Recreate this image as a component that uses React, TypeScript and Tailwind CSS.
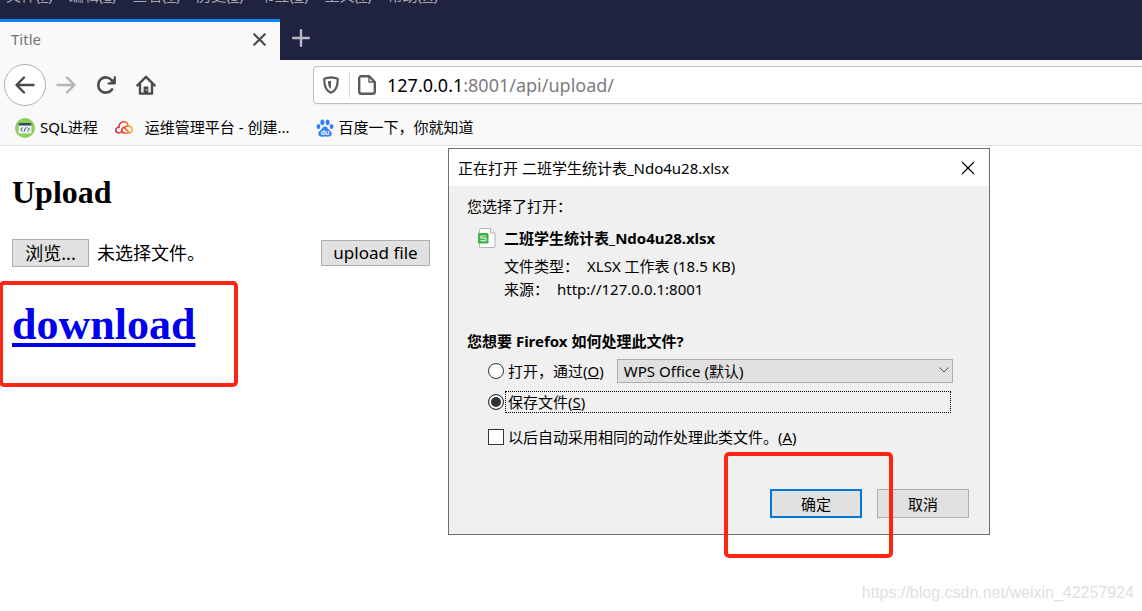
import { useRef, useState } from "react";

const menus = [
  { label: "文件", key: "F" },
  { label: "编辑", key: "E" },
  { label: "查看", key: "V" },
  { label: "历史", key: "S" },
  { label: "书签", key: "B" },
  { label: "工具", key: "T" },
  { label: "帮助", key: "H" },
];

const BackIcon = () => (
  <svg width="20" height="18" viewBox="0 0 20 18" fill="none" stroke="currentColor" strokeWidth="2.4" strokeLinecap="round" strokeLinejoin="round">
    <path d="M18.5 9H2M9 1.5L1.5 9L9 16.5" />
  </svg>
);

const ForwardIcon = () => (
  <svg width="20" height="18" viewBox="0 0 20 18" fill="none" stroke="currentColor" strokeWidth="2.4" strokeLinecap="round" strokeLinejoin="round">
    <path d="M1.5 9H18M11 1.5L18.5 9L11 16.5" />
  </svg>
);

const ReloadIcon = () => (
  <svg width="20" height="18" viewBox="0 0 20 18" fill="none" stroke="currentColor" strokeWidth="2.6" strokeLinecap="round" strokeLinejoin="round">
    <path d="M16 13.4A7.6 7.6 0 1 1 16 4.6" />
    <path d="M18.8 1V7.4H12.4" strokeWidth="2" />
    <path d="M18.8 2.4V7.4H13.8z" fill="currentColor" strokeWidth="1" />
  </svg>
);

const HomeIcon = () => (
  <svg width="20" height="20" viewBox="0 0 20 20" fill="none" stroke="currentColor" strokeWidth="2.4" strokeLinecap="round" strokeLinejoin="round">
    <path d="M1.4 10.4L10 1.8L18.6 10.4" />
    <path d="M4 9.5V18.6H16V9.5" />
    <path d="M8.2 18V12H11.8V18z" fill="currentColor" strokeWidth="1.2" />
    <path d="M10.8 14.6v.8" stroke="#f9f9fa" strokeWidth="1" />
  </svg>
);

const ShieldIcon = () => (
  <svg width="16" height="18" viewBox="0 0 16 18" fill="none" stroke="currentColor" strokeWidth="2.2" strokeLinejoin="round">
    <path d="M8 1.3C5.8 1.5 3.5 2 1.3 2.8C1.1 9.5 2.5 14.6 8 16.7C13.5 14.6 14.9 9.5 14.7 2.8C12.5 2 10.2 1.5 8 1.3z" />
    <path d="M8 4.8V13C5.8 11.5 4.9 9 4.9 5.3z" fill="currentColor" stroke="none" />
  </svg>
);

const PageIcon = () => (
  <svg width="18" height="20" viewBox="0 0 18 20" fill="none" stroke="currentColor" strokeWidth="2.4" strokeLinejoin="round">
    <path d="M4 1.2H11L16.8 7V16.5A2.3 2.3 0 0 1 14.5 18.8H3.5A2.3 2.3 0 0 1 1.2 16.5V3.5A2.3 2.3 0 0 1 4 1.2z" />
    <path d="M11 1.5V7H16.5" strokeWidth="1.4" />
  </svg>
);

const CodeIcon = () => (
  <svg width="20" height="20" viewBox="0 0 20 20">
    <circle cx="10" cy="10" r="10" fill="#8fcf55" />
    <rect x="3.5" y="5" width="13" height="10.5" rx="1" fill="#e9f0f2" />
    <path d="M3.5 7.6V6a1 1 0 0 1 1-1h11a1 1 0 0 1 1 1v1.6z" fill="#324a5e" />
    <path d="M7.6 9.6L5.6 11.4L7.6 13.2M12.4 9.6L14.4 11.4L12.4 13.2M10.7 9.4L9.3 13.4" stroke="#324a5e" strokeWidth="1" fill="none" />
  </svg>
);

const CloudIcon = () => (
  <svg width="18" height="13" viewBox="0 0 18 13" fill="none" strokeWidth="1.6" strokeLinecap="round" strokeLinejoin="round">
    <defs>
      <linearGradient id="cloud" gradientUnits="userSpaceOnUse" x1="0" y1="0" x2="18" y2="0">
        <stop offset="0" stopColor="#cf1f55" />
        <stop offset=".5" stopColor="#f3512c" />
        <stop offset="1" stopColor="#fbb52c" />
      </linearGradient>
    </defs>
    <g stroke="url(#cloud)">
      <path d="M7.4 9.6C6.4 11.2 5.2 12 3.8 12C2 12 .8 10.7 .8 9.1C.8 7.4 2.2 6.2 4 6.2" />
      <path d="M4 6.2C3.8 3 5.8 .8 8.6 .8C11.2 .8 13 2.6 13 5C15.4 4.8 17.2 6.4 17.2 8.5C17.2 10.6 15.6 12 13.4 12H9.6C8 12 6.8 11 6.8 9.4C6.8 7.2 9.4 5.6 13 5" />
      <path d="M9 6.4L13.4 10.6" />
    </g>
  </svg>
);

const PawIcon = () => (
  <svg width="18" height="18" viewBox="0 0 18 18" fill="#2f80f5">
    <ellipse cx="6.4" cy="3.3" rx="2" ry="2.9" />
    <ellipse cx="11.6" cy="3.3" rx="2" ry="2.9" />
    <ellipse cx="2.5" cy="7.4" rx="1.9" ry="2.5" />
    <ellipse cx="15.6" cy="7.4" rx="1.9" ry="2.5" />
    <path d="M9 7.6C11 7.6 11.6 9.5 13 10.8C14.6 12.2 16 13.2 15.6 15.3C15.2 17.6 12.8 17.9 9 17.6C5.2 17.9 2.8 17.6 2.4 15.3C2 13.2 3.4 12.2 5 10.8C6.4 9.5 7 7.6 9 7.6z" />
    <text x="9" y="16" textAnchor="middle" fill="#fff" fontSize="7" fontWeight="700" fontFamily="Liberation Sans, sans-serif">
      du
    </text>
  </svg>
);

const SheetIcon = () => (
  <svg width="18" height="20" viewBox="0 0 18 20">
    <path d="M1.5 1.5A1 1 0 0 1 2.5.5H12.5L17 5V18.5A1 1 0 0 1 16 19.5H2.5A1 1 0 0 1 1.5 18.5z" fill="#fff" stroke="#b5b5b5" />
    <path d="M12.5.5V5H17" fill="#eee" stroke="#b5b5b5" />
    <rect x="0" y="5" width="10.5" height="10.5" rx="1" fill="#3fb24c" />
    <path d="M8 8H3V10.2H7.8V12.6H2.6" fill="none" stroke="#d6f2d9" strokeWidth="1.2" />
  </svg>
);

const DownloadDialog = () => {
  const [action, setAction] = useState<string>("save");
  const [remember, setRemember] = useState<boolean>(false);

  const radioClass =
    "appearance-none w-4 h-4 shrink-0 rounded-full border border-[#333] bg-white checked:bg-[#333] checked:shadow-[inset_0_0_0_2px_white]";

  return (
    <div
      role="dialog"
      aria-labelledby="dialog-title"
      className="absolute left-[448px] top-0.5 w-[542px] border border-[#6e6e6e] bg-[#f0f0f0] text-[15px] leading-5"
    >
      <div className="h-[37px] flex items-center justify-between bg-white pl-[9px] pr-3.5">
        <h2 id="dialog-title">正在打开 二班学生统计表_Ndo4u28.xlsx</h2>
        <button type="button" aria-label="关闭">
          <svg width="14" height="14" viewBox="0 0 14 14" stroke="#000" strokeWidth="1.2">
            <path d="M1 1L13 13M13 1L1 13" />
          </svg>
        </button>
      </div>

      <div className="pl-[18px] pr-5 pt-2.5 pb-4">
        <p>您选择了打开：</p>

        <div className="flex gap-2 pl-[11px] mt-3">
          <SheetIcon />
          <div>
            <p className="font-bold">二班学生统计表_Ndo4u28.xlsx</p>
            <p className="mt-2">
              文件类型：<span className="ml-2">XLSX 工作表 (18.5 KB)</span>
            </p>
            <p className="mt-[3px]">
              来源：<span className="ml-2">http://127.0.0.1:8001</span>
            </p>
          </div>
        </div>

        <p className="font-bold mt-8">您想要 Firefox 如何处理此文件?</p>

        <div className="flex items-center pl-[21px] pr-4 mt-2">
          <label className="flex items-center gap-1">
            <input
              type="radio"
              name="action"
              checked={action === "open"}
              onChange={() => setAction("open")}
              className={radioClass}
            />
            <span>
              打开，通过(<u>O</u>)
            </span>
          </label>
          <div className="relative flex-1 ml-[13px]">
            <select
              aria-label="打开方式"
              className="block appearance-none w-full h-6 pl-1.5 bg-[#e1e1e1] border border-[#adadad] leading-5"
            >
              <option>WPS Office (默认)</option>
            </select>
            <svg width="10" height="6" viewBox="0 0 10 6" fill="none" stroke="#555" className="absolute right-1 top-2 pointer-events-none">
              <path d="M.5.5L5 5L9.5.5" />
            </svg>
          </div>
        </div>

        <label className="flex items-center pl-[21px] pr-[18px] mt-2">
          <input
            type="radio"
            name="action"
            checked={action === "save"}
            onChange={() => setAction("save")}
            className={radioClass}
          />
          <span className="flex-1 ml-px pl-0.5 border border-dotted border-black">
            保存文件(<u>S</u>)
          </span>
        </label>

        <label className="flex items-center gap-1 pl-[21px] mt-3.5">
          <input
            type="checkbox"
            checked={remember}
            onChange={(e) => setRemember(e.target.checked)}
            className="appearance-none w-4 h-4 border border-[#333] bg-white checked:bg-[#333]"
          />
          <span>
            以后自动采用相同的动作处理此类文件。(<u>A</u>)
          </span>
        </label>

        <div className="flex justify-end gap-[15px] mt-[42px]">
          <div className="relative">
            <button type="button" className="block w-[92px] h-[29px] bg-[#e1e1e1] border-2 border-[#0078d7]">
              确定
            </button>
            <div className="absolute -left-[46px] -right-[31px] -top-[37px] -bottom-10 border-4 border-[#ff2314] rounded-[5px] z-10 pointer-events-none" />
          </div>
          <button type="button" className="w-[92px] h-[29px] bg-[#e1e1e1] border border-[#adadad]">
            取消
          </button>
        </div>
      </div>
    </div>
  );
};

const App = () => {
  const fileInput = useRef<HTMLInputElement>(null);
  const [fileName, setFileName] = useState<string>("");

  return (
    <div className="min-h-screen flex flex-col overflow-hidden bg-white text-black font-['Noto_Sans','Noto_Sans_CJK_SC',sans-serif]">
      <header>
        <div className="bg-[#202340]">
          {/* menu bar, scrolled almost out of the window */}
          <div className="h-[5px] flex items-end gap-4 overflow-hidden pl-1.5 text-[15px] leading-5 text-[#a9a9b0]">
            {menus.map((m) => (
              <span key={m.key}>
                {m.label}(<u>{m.key}</u>)
              </span>
            ))}
          </div>

          <div className="flex items-stretch pt-3.5">
            <div className="w-[280px] h-[41px] flex items-center justify-between border-t-3 border-[#0a84ff] bg-[#f9f9fa] pl-[11px] pr-3.5 pb-1">
              <span className="text-[15px] text-[#737373]">Title</span>
              <button type="button" aria-label="关闭标签页">
                <svg width="13" height="13" viewBox="0 0 13 13" stroke="#45454a" strokeWidth="2" strokeLinecap="round">
                  <path d="M1.2 1.2L11.8 11.8M11.8 1.2L1.2 11.8" />
                </svg>
              </button>
            </div>
            <button type="button" aria-label="新建标签页" className="pl-3 pb-1">
              <svg width="18" height="18" viewBox="0 0 18 18" stroke="#b9bac6" strokeWidth="2.4" strokeLinecap="round">
                <path d="M9 1.2V16.8M1.2 9H16.8" />
              </svg>
            </button>
          </div>
        </div>

        <nav className="flex items-center h-[50px] bg-[#f9f9fa] pl-1 text-[#4a4a4f]">
          <button type="button" aria-label="后退" className="w-[42px] h-[42px] flex items-center justify-center rounded-full border border-[#b0b0b3] bg-white">
            <BackIcon />
          </button>
          <button type="button" aria-label="前进" className="ml-2.5 text-[#b4b4b7]">
            <ForwardIcon />
          </button>
          <button type="button" aria-label="刷新" className="ml-5">
            <ReloadIcon />
          </button>
          <button type="button" aria-label="主页" className="ml-5">
            <HomeIcon />
          </button>
          <div className="flex-1 flex items-center h-[38px] ml-[157px] -mr-1 pl-[9px] rounded-sm border border-[#bebebe] bg-white shadow-xs text-[#5b5b5f]">
            <ShieldIcon />
            <span className="w-px h-[26px] ml-2.5 mr-2 bg-[#dcdcdc]" />
            <PageIcon />
            <p className="ml-[11px] text-[18px] text-[#7c7c80]">
              <span className="text-black">127.0.0.1</span>:8001/api/upload/
            </p>
          </div>
        </nav>

        <div className="flex items-center h-9 bg-[#f9f9fa] border-b border-[#e0e0e1] pl-[15px] text-[15px]">
          <a href="#sql" className="flex items-center gap-[5px]">
            <CodeIcon />
            SQL进程
          </a>
          <a href="#ops" className="flex items-center gap-3 ml-[17px]">
            <CloudIcon />
            运维管理平台 - 创建...
          </a>
          <a href="#baidu" className="flex items-center gap-[5px] ml-[26px]">
            <PawIcon />
            百度一下，你就知道
          </a>
        </div>
      </header>

      <main className="relative flex-1 pl-3">
        <h1 className="pt-7 text-[32px] leading-9 font-bold font-['Liberation_Serif',serif]">Upload</h1>

        <form className="flex items-center mt-[29px] text-[18px] leading-6" onSubmit={(e) => e.preventDefault()}>
          <input
            ref={fileInput}
            type="file"
            aria-label="文件"
            className="hidden"
            onChange={(e) => setFileName(e.target.files?.[0]?.name ?? "")}
          />
          <div className="flex items-center w-[309px]">
            <button
              type="button"
              onClick={() => fileInput.current?.click()}
              className="w-[77px] h-7 bg-[#e1e1e1] border border-[#adadad]"
            >
              浏览...
            </button>
            <span className="ml-2">{fileName || "未选择文件。"}</span>
          </div>
          <button type="submit" className="w-[109px] h-[26px] bg-[#e1e1e1] border border-[#adadad] text-[17px]">
            upload file
          </button>
        </form>

        <div className="relative mt-8 w-fit">
          <a
            href="#download"
            className="block text-[44px] leading-[52px] font-bold text-[#0000ee] underline decoration-4 underline-offset-4 font-['Liberation_Serif',serif]"
          >
            download
          </a>
          <div className="absolute -left-[13px] -right-[43px] -top-[18px] -bottom-9 border-4 border-[#ff2314] rounded-[5px] pointer-events-none" />
        </div>

        <DownloadDialog />

        <p className="absolute right-2 bottom-2 text-[16px] leading-5 text-[#e0e0e0] font-['Liberation_Sans',sans-serif]">
          https://blog.csdn.net/weixin_42257924
        </p>
      </main>
    </div>
  );
};

export default App;
